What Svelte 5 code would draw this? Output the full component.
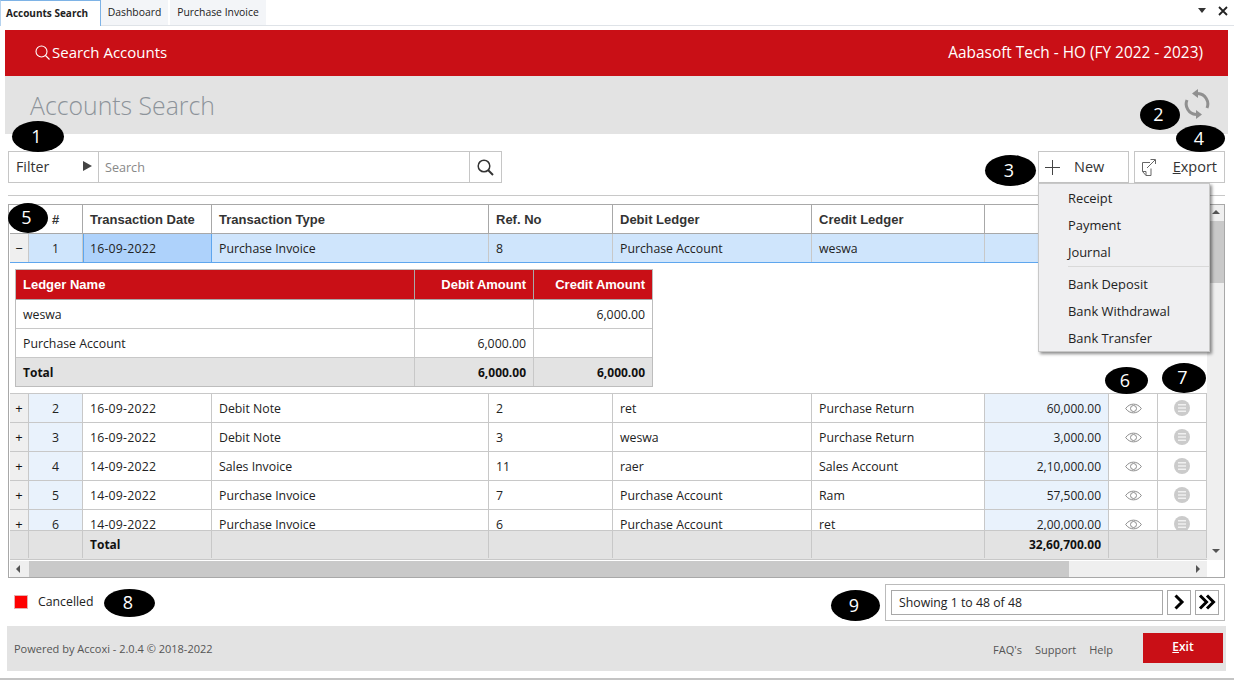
<script>
  const rows = [
    { n: 2, date: '16-09-2022', type: 'Debit Note', ref: '2', debit: 'ret', credit: 'Purchase Return', amount: '60,000.00' },
    { n: 3, date: '16-09-2022', type: 'Debit Note', ref: '3', debit: 'weswa', credit: 'Purchase Return', amount: '3,000.00' },
    { n: 4, date: '14-09-2022', type: 'Sales Invoice', ref: '11', debit: 'raer', credit: 'Sales Account', amount: '2,10,000.00' },
    { n: 5, date: '14-09-2022', type: 'Purchase Invoice', ref: '7', debit: 'Purchase Account', credit: 'Ram', amount: '57,500.00' },
    { n: 6, date: '14-09-2022', type: 'Purchase Invoice', ref: '6', debit: 'Purchase Account', credit: 'ret', amount: '2,00,000.00' }
  ];
  const menu1 = ['Receipt', 'Payment', 'Journal'];
  const menu2 = ['Bank Deposit', 'Bank Withdrawal', 'Bank Transfer'];
</script>

<div class="window">
  <div class="tabs">
    <div class="tab active">Accounts Search</div>
    <div class="tab dash">Dashboard</div>
    <div class="tab inv">Purchase Invoice</div>
    <div class="win-btns">
      <svg width="8" height="5" viewBox="0 0 8 5"><path d="M0 0h8L4 5z" fill="#333" /></svg>
      <svg width="10" height="10" viewBox="0 0 10 10"><path d="M1 1l8 8M9 1l-8 8" stroke="#222" stroke-width="1.8" fill="none" /></svg>
    </div>
  </div>

  <div class="page">
    <header class="topbar">
      <div class="topbar-left">
        <svg width="15" height="15" viewBox="0 0 15 15" fill="none" stroke="#fff" stroke-width="1.1">
          <circle cx="6.5" cy="6.5" r="5.5" /><path d="M10.5 10.5l4 4" />
        </svg>
        Search Accounts
      </div>
      <div class="company">Aabasoft Tech - HO (FY 2022 - 2023)</div>
    </header>

    <div class="title-bar">
      <h1>Accounts Search</h1>
      <svg class="sync" width="26" height="32" viewBox="0 0 26 32" fill="none" stroke="#909090" stroke-width="3">
        <path d="M23 20A10.500 10.500 0 0 0 14 5.500" />
        <path d="M14 1v9L8 5.500z" fill="#909090" stroke="none" />
        <path d="M3 12A10.500 10.500 0 0 0 12 26.500" />
        <path d="M12 22v9l6-4.500z" fill="#909090" stroke="none" />
      </svg>
    </div>

    <div class="toolbar">
      <div class="search">
        <div class="filter">Filter <span class="arrow"></span></div>
        <div class="search-input">Search</div>
        <div class="search-btn">
          <svg width="17" height="17" viewBox="0 0 17 17" fill="none" stroke="#333" stroke-width="1.5">
            <circle cx="7" cy="7" r="5.800" /><path d="M11 11l5 5" stroke-width="2" />
          </svg>
        </div>
      </div>
      <div class="actions">
        <div class="btn new">
          <svg width="15" height="15" viewBox="0 0 15 15" stroke="#444" stroke-width="1"><path d="M7.500 0v15M0 7.500h15" /></svg>
          <span>New</span>
        </div>
        <div class="btn export">
          <svg width="15" height="17" viewBox="0 0 15 17" fill="none" stroke="#666" stroke-width="1">
            <path d="M9 3.500H1.500v9l3.500 4h5v-7" /><path d="M1.500 12.500H5v4" /><path d="M6 9l8-8M9.500.5H14.500V5" />
          </svg>
          <span><u>E</u>xport</span>
        </div>
      </div>
    </div>

    <div class="rule"></div>

    <div class="grid-box">
      <div class="grid-main">
        <div class="row head">
          <div class="cell x"></div>
          <div class="cell num">#</div>
          <div class="cell">Transaction Date</div>
          <div class="cell">Transaction Type</div>
          <div class="cell">Ref. No</div>
          <div class="cell">Debit Ledger</div>
          <div class="cell">Credit Ledger</div>
          <div class="cell"></div>
          <div class="cell"></div>
          <div class="cell"></div>
        </div>

        <div class="body">
          <div class="row selected">
            <div class="cell x">−</div>
            <div class="cell num">1</div>
            <div class="cell focus date">16-09-2022</div>
            <div class="cell">Purchase Invoice</div>
            <div class="cell">8</div>
            <div class="cell">Purchase Account</div>
            <div class="cell">weswa</div>
            <div class="cell"></div>
            <div class="cell"></div>
            <div class="cell"></div>
          </div>

          <div class="detail">
            <div class="sub">
              <div class="sub-row sub-head">
                <div>Ledger Name</div><div class="r">Debit Amount</div><div class="r">Credit Amount</div>
              </div>
              <div class="sub-row">
                <div>weswa</div><div class="r"></div><div class="r">6,000.00</div>
              </div>
              <div class="sub-row">
                <div>Purchase Account</div><div class="r">6,000.00</div><div class="r"></div>
              </div>
              <div class="sub-row sub-total">
                <div>Total</div><div class="r">6,000.00</div><div class="r">6,000.00</div>
              </div>
            </div>
          </div>

          {#each rows as row}
            <div class="row">
              <div class="cell x">+</div>
              <div class="cell num">{row.n}</div>
              <div class="cell date">{row.date}</div>
              <div class="cell">{row.type}</div>
              <div class="cell">{row.ref}</div>
              <div class="cell">{row.debit}</div>
              <div class="cell">{row.credit}</div>
              <div class="cell amount">{row.amount}</div>
              <div class="cell icon">
                <svg width="17" height="11" viewBox="0 0 17 11" fill="none" stroke="#8c8c8c" stroke-width="1">
                  <path d="M.7 5.500C4.500-.3 12.500-.3 16.300 5.500 12.500 11.300 4.500 11.300.7 5.500z" />
                  <circle cx="8.500" cy="5.500" r="3" />
                </svg>
              </div>
              <div class="cell icon">
                <svg width="16" height="16" viewBox="0 0 16 16">
                  <circle cx="8" cy="8" r="8" fill="#cbcbcb" />
                  <path d="M4 4.800h8M4 8h8M4 11.200h8" stroke="#f0f0f0" stroke-width="1.500" />
                </svg>
              </div>
            </div>
          {/each}
        </div>

        <div class="row total">
          <div class="cell x"></div>
          <div class="cell num"></div>
          <div class="cell">Total</div>
          <div class="cell"></div>
          <div class="cell"></div>
          <div class="cell"></div>
          <div class="cell"></div>
          <div class="cell amount">32,60,700.00</div>
          <div class="cell"></div>
          <div class="cell"></div>
        </div>

        <div class="hscroll">
          <span class="tri left"></span>
          <div class="hthumb"></div>
          <span class="tri right"></span>
        </div>
      </div>

      <div class="vscroll">
        <div class="vtrack">
          <span class="tri up"></span>
          <div class="vthumb"></div>
          <span class="tri down"></span>
        </div>
      </div>
    </div>

    <div class="status">
      <div class="legend"><span class="swatch"></span>Cancelled</div>
      <div class="pager">
        <div class="showing">Showing 1 to 48 of 48</div>
        <div class="page-btn">
          <svg width="12" height="16" viewBox="0 0 12 16" fill="none" stroke="#000" stroke-width="3"><path d="M2.500 1.500l6.500 6.500-6.500 6.500" /></svg>
        </div>
        <div class="page-btn">
          <svg width="18" height="16" viewBox="0 0 18 16" fill="none" stroke="#000" stroke-width="3"><path d="M2 1.500l6.500 6.500-6.500 6.500M9 1.500l6.500 6.500-6.500 6.500" /></svg>
        </div>
      </div>
    </div>

    <footer class="foot">
      <div class="powered">Powered by Accoxi - 2.0.4 © 2018-2022</div>
      <div class="foot-right">
        <span>FAQ's</span><span>Support</span><span>Help</span>
        <div class="exit"><u>E</u>xit</div>
      </div>
    </footer>
  </div>

  <div class="menu">
    {#each menu1 as item}<div class="menu-item">{item}</div>{/each}
    <div class="menu-sep"></div>
    {#each menu2 as item}<div class="menu-item">{item}</div>{/each}
  </div>

  <!-- numbered callouts drawn over the screen -->
  <div class="mark" style="left:12px;top:121px;width:52px;height:31px">1</div>
  <div class="mark" style="left:1140px;top:100px;width:40px;height:30px">2</div>
  <div class="mark" style="left:985px;top:155px;width:51px;height:31px">3</div>
  <div class="mark" style="left:1176px;top:125px;width:49px;height:27px">4</div>
  <div class="mark" style="left:8px;top:203px;width:40px;height:30px">5</div>
  <div class="mark" style="left:1105px;top:367px;width:43px;height:27px">6</div>
  <div class="mark" style="left:1162px;top:363px;width:44px;height:30px">7</div>
  <div class="mark" style="left:104px;top:589px;width:51px;height:28px">8</div>
  <div class="mark" style="left:831px;top:590px;width:49px;height:31px">9</div>
</div>

<style>
  :global(body) {
    margin: 0;
    background: #fff;
  }

  .window {
    position: relative;
    width: 1234px;
    height: 680px;
    overflow: hidden;
    font-family: "Open Sans", "Noto Sans", sans-serif;
    font-size: 12.300px;
    color: #222;
    background: #fff;
    border-bottom: 2px solid #c4c4c4;
    box-sizing: border-box;
  }

  .tabs {
    display: flex;
    height: 26px;
    box-sizing: border-box;
    border-bottom: 1px solid #dfe3e8;
    font-size: 10.400px;
  }

  .tab {
    display: flex;
    align-items: center;
    justify-content: center;
    box-sizing: border-box;
    padding-bottom: 1px;
    margin-right: 2px;
    background: #f3f5f8;
    color: #222;
    white-space: nowrap;
  }

  .tab.dash {
    width: 67px;
  }

  .tab.inv {
    width: 96px;
  }

  .tab.active {
    justify-content: flex-start;
    width: 101px;
    margin-right: 0;
    padding: 0 0 1px 5px;
    background: #fff;
    font-weight: 700;
    border-top: 1px solid #7eb3e6;
    border-left: 1px solid #b5d2ee;
    border-right: 1px solid #7eb3e6;
    height: 26px;
    font-size: 10px;
  }

  .win-btns {
    margin-left: auto;
    display: flex;
    align-items: center;
    gap: 12px;
    padding: 0 6px 4px 0;
  }

  .page {
    margin: 4px 6px 0 5px;
  }

  .topbar {
    height: 46px;
    box-sizing: border-box;
    background: #c90f16;
    color: #fff;
    display: flex;
    align-items: center;
    justify-content: space-between;
    padding: 0 25px 2px 30px;
    font-size: 15px;
  }

  .company {
    font-size: 15.400px;
  }

  .topbar-left {
    display: flex;
    align-items: center;
    gap: 2px;
  }

  .title-bar {
    height: 58px;
    background: #e3e3e3;
    display: flex;
    justify-content: space-between;
    padding: 0 18px 0 25px;
  }

  h1 {
    margin: 9px 0 0;
    font-size: 24.800px;
    font-weight: 300;
    color: #8d939a;
    line-height: 40px;
  }

  .sync {
    margin-top: 12px;
  }

  .toolbar {
    display: flex;
    justify-content: space-between;
    padding: 17px 3px 0 3px;
    height: 32px;
  }

  .search {
    display: flex;
    width: 494px;
    height: 32px;
    box-sizing: border-box;
    border: 1px solid #c6c6c6;
  }

  .filter {
    width: 90px;
    box-sizing: border-box;
    padding: 0 6px 2px 7px;
    display: flex;
    align-items: center;
    justify-content: space-between;
    border-right: 1px solid #c6c6c6;
    font-size: 14.200px;
    color: #333;
  }

  .search-input {
    flex: 1;
    display: flex;
    align-items: center;
    padding-left: 6px;
    color: #888;
    font-size: 12.600px;
  }

  .arrow {
    width: 0;
    height: 0;
    border-left: 9px solid #444;
    border-top: 5px solid transparent;
    border-bottom: 5px solid transparent;
  }

  .search-btn {
    width: 31px;
    display: flex;
    align-items: center;
    justify-content: center;
    border-left: 1px solid #c6c6c6;
  }

  .actions {
    display: flex;
    gap: 5px;
  }

  .btn {
    height: 32px;
    box-sizing: border-box;
    border: 1px solid #c6c6c6;
    display: flex;
    align-items: center;
    font-size: 14.500px;
    color: #333;
    background: #fff;
  }

  .btn span {
    margin-bottom: 2px;
  }

  .btn.new {
    width: 91px;
    padding-left: 6px;
    gap: 14px;
  }

  .btn.export {
    width: 91px;
    padding-left: 6px;
    justify-content: space-between;
    padding-right: 7px;
  }

  .rule {
    height: 1px;
    background: #c8c8c8;
    margin: 12px 3px 8px 3px;
  }

  .grid-box {
    display: flex;
    height: 374px;
    margin: 0 3px 0 3px;
    padding-left: 1px;
    box-sizing: border-box;
    border: 1px solid #a8a8a8;
    background: #fff;
  }

  .grid-main {
    width: 1197px;
    flex: none;
  }

  .row {
    display: grid;
    grid-template-columns: 19px 54px 129px 277px 124px 199px 173px 124px 49px 49px;
    height: 29px;
    box-sizing: border-box;
    border-bottom: 1px solid #c8c8c8;
  }

  .cell {
    display: flex;
    align-items: center;
    padding: 0 7px;
    border-right: 1px solid #c8c8c8;
    white-space: nowrap;
    overflow: hidden;
    min-width: 0;
  }

  .date {
    letter-spacing: 0.200px;
  }

  .x {
    padding: 0;
    justify-content: center;
    background: #efefef;
    font-size: 13px;
    color: #111;
  }

  .num {
    padding: 0;
    justify-content: center;
    background: #e9f2fc;
  }

  .amount {
    justify-content: flex-end;
    background: #e9f2fc;
    font-size: 12px;
  }

  .icon {
    padding: 0;
    justify-content: center;
  }

  .head {
    border-bottom-color: #a8a8a8;
    font-family: "Liberation Sans", Arial, sans-serif;
    font-weight: 700;
    font-size: 13px;
    color: #333;
  }

  .head .cell {
    border-right-color: #a8a8a8;
    background: #fff;
  }

  .body {
    height: 296px;
    overflow: hidden;
  }

  .selected {
    background: #cfe5fc;
    border-bottom-color: #5ea6ee;
  }

  .selected .num {
    background: #cfe5fc;
  }

  .selected .focus {
    background: #aed2fb;
    border-left: 1px solid #5ea6ee;
    border-right: 1px solid #5ea6ee;
    padding-left: 6px;
  }

  .detail {
    height: 131px;
    box-sizing: border-box;
    padding: 6px 0 0 5px;
    border-bottom: 1px solid #c8c8c8;
  }

  .sub {
    width: 638px;
    box-sizing: border-box;
    border: 1px solid #bdbdbd;
    border-bottom: 0;
  }

  .sub-row {
    display: grid;
    grid-template-columns: 399px 119px 118px;
    height: 29px;
    box-sizing: border-box;
    border-bottom: 1px solid #c8c8c8;
  }

  .sub-row > div {
    display: flex;
    align-items: center;
    padding: 0 7px;
    border-right: 1px solid #c8c8c8;
    white-space: nowrap;
  }

  .sub-row > div:last-child {
    border-right: 0;
  }

  .sub-row .r {
    justify-content: flex-end;
  }

  .sub-head {
    height: 30px;
    background: #c90f16;
    color: #fff;
    font-family: "Liberation Sans", Arial, sans-serif;
    font-weight: 700;
    font-size: 13px;
    border-bottom-color: #a8a8a8;
  }

  .sub-head > div {
    border-right-color: #a9a9a9;
  }

  .sub-total {
    background: #e3e3e3;
    font-weight: 700;
    font-size: 12px;
    color: #111;
    border-bottom-color: #bdbdbd;
  }

  .total {
    background: #e3e3e3;
    font-weight: 700;
    font-size: 12px;
    color: #111;
    height: 30px;
    border-top: 1px solid #c8c8c8;
    padding-bottom: 1px;
  }

  .total .x,
  .total .num,
  .total .amount {
    background: #e3e3e3;
  }

  .hscroll {
    display: flex;
    align-items: center;
    height: 16px;
    margin-top: 1px;
    background: #efefef;
  }

  .hthumb {
    width: 1040px;
    height: 16px;
    margin-left: 9px;
    background: #c9c9c9;
  }

  .tri {
    display: block;
    width: 0;
    height: 0;
  }

  .tri.left {
    margin-left: 6px;
    border-right: 4px solid #555;
    border-top: 4px solid transparent;
    border-bottom: 4px solid transparent;
  }

  .tri.right {
    margin-left: auto;
    margin-right: 7px;
    border-left: 4px solid #555;
    border-top: 4px solid transparent;
    border-bottom: 4px solid transparent;
  }

  .vscroll {
    flex: 1;
  }

  .vtrack {
    height: 355px;
    background: #efefef;
    display: flex;
    flex-direction: column;
    align-items: center;
  }

  .vthumb {
    width: 100%;
    height: 62px;
    margin-top: 7px;
    background: #c9c9c9;
  }

  .tri.up {
    margin-top: 5px;
    border-bottom: 4px solid #555;
    border-left: 4px solid transparent;
    border-right: 4px solid transparent;
  }

  .tri.down {
    margin-top: auto;
    margin-bottom: 7px;
    border-top: 4px solid #555;
    border-left: 4px solid transparent;
    border-right: 4px solid transparent;
  }

  .status {
    display: flex;
    justify-content: space-between;
    align-items: center;
    height: 48px;
    padding: 0 3px 0 9px;
  }

  .legend {
    display: flex;
    align-items: center;
    gap: 10px;
    color: #222;
    margin-bottom: 1px;
  }

  .swatch {
    width: 14px;
    height: 14px;
    box-sizing: border-box;
    background: #fe0000;
    border: 1px solid #e4b0b0;
  }

  .pager {
    display: flex;
    align-items: center;
    gap: 4px;
    width: 340px;
    height: 37px;
    box-sizing: border-box;
    border: 1px solid #bbb;
    padding: 0 5px;
  }

  .showing {
    flex: 1;
    height: 25px;
    box-sizing: border-box;
    border: 1px solid #a8a8a8;
    display: flex;
    align-items: center;
    padding-left: 7px;
  }

  .page-btn {
    width: 24px;
    height: 25px;
    box-sizing: border-box;
    border: 1px solid #a8a8a8;
    display: flex;
    align-items: center;
    justify-content: center;
  }

  .foot {
    display: flex;
    justify-content: space-between;
    align-items: center;
    height: 45px;
    margin: 0 2px;
    padding: 0 3px 0 7px;
    background: #e3e3e3;
    font-size: 11px;
    color: #555;
  }

  .foot-right {
    display: flex;
    align-items: center;
    gap: 13px;
  }

  .foot-right span {
    margin-top: 2px;
  }

  .exit {
    width: 80px;
    height: 30px;
    margin: 0 0 2px 17px;
    background: #c90f16;
    color: #fff;
    display: flex;
    align-items: center;
    justify-content: center;
    padding-bottom: 2px;
    box-sizing: border-box;
    font-size: 12px;
    font-weight: 600;
  }

  .menu {
    position: absolute;
    left: 1038px;
    top: 183px;
    width: 172px;
    height: 169px;
    box-sizing: border-box;
    background: #efeff1;
    border: 1px solid #c8c8c8;
    box-shadow: 2px 2px 3px rgba(0, 0, 0, 0.45);
    font-size: 12.900px;
    color: #222;
  }

  .menu-item {
    height: 27px;
    display: flex;
    align-items: center;
    padding-left: 29px;
  }

  .menu-sep {
    height: 1px;
    margin: 1px 0 3px 29px;
    background: #d9d9d9;
  }

  .mark {
    position: absolute;
    box-sizing: border-box;
    padding: 0 3px 2px 0;
    border-radius: 50%;
    background: #000;
    color: #fff;
    display: flex;
    align-items: center;
    justify-content: center;
    font-size: 18px;
  }
</style>
